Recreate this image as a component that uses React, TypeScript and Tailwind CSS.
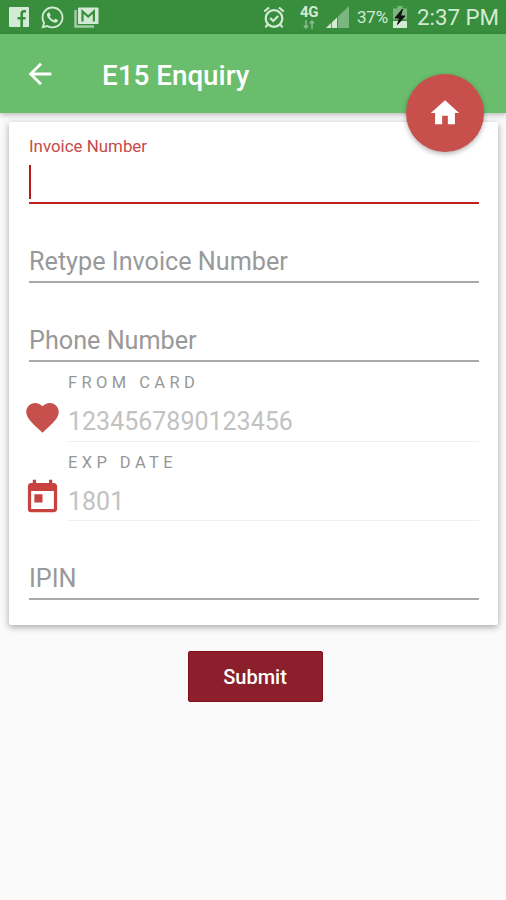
import { useState } from 'react';
import { MdArrowBack, MdFavorite, MdHome, MdToday } from 'react-icons/md';
import { FaWhatsapp } from 'react-icons/fa';

function StatusBar() {
    return (
        <div className="h-[34px] bg-[#388e3c] flex items-center justify-between pl-[9px] pr-[7px] text-[#d3ead4]">
            <div className="flex items-center">
                <svg className="w-[20px] h-[20px]" viewBox="0 0 20 20">
                    <rect width="20" height="20" rx="1" fill="currentColor" />
                    <path d="M17 4.300h-2c-1.600 0-2.300.9-2.300 2.500V20M8.500 11.300h8" fill="none" stroke="#388e3c" strokeWidth="2.600" />
                </svg>
                <FaWhatsapp className="size-[25px] ml-[11px]" />
                <svg className="w-[25px] h-[22px] ml-[9px]" viewBox="0 0 25 22">
                    <path d="M1.500 4v16.500H20" fill="none" stroke="currentColor" strokeWidth="2.500" opacity="0.7" />
                    <rect x="4" y="1.500" width="20.500" height="16.500" rx="1" fill="currentColor" />
                    <path d="M8.500 15.500V5.500l5.700 5 5.700-5v10" fill="none" stroke="#388e3c" strokeWidth="2.200" />
                </svg>
            </div>

            <div className="flex items-center">
                <svg className="w-[22px] h-[23px]" viewBox="0 0 22 23" fill="none" stroke="currentColor" strokeWidth="2.200">
                    <circle cx="11" cy="12.500" r="8.300" />
                    <path d="M1.300 5.500 6 1.500M20.700 5.500 16 1.500M4.500 18.500 2.500 21.500M17.500 18.500l2 3M7.200 12l3 3 5-5" />
                </svg>
                <div className="w-[20px] h-[24px] ml-[14px] flex flex-col items-center">
                    <span className="text-[15px] leading-[14px] font-bold tracking-[-0.5px]">4G</span>
                    <svg className="w-[12px] h-[9px] mt-[1px] opacity-50" viewBox="0 0 12 9" fill="none" stroke="currentColor" strokeWidth="1.600">
                        <path d="M3 0v8M.8 5.500 3 8l2.200-2.500M9 9V1M6.800 3.500 9 1l2.200 2.500" />
                    </svg>
                </div>
                <svg className="w-[23px] h-[22px] ml-[7px]" viewBox="0 0 23 22">
                    <path d="M0 22 23 0v22z" fill="#7ab67d" />
                    <path d="M0 22 11 11.500V22z" fill="currentColor" />
                    <path d="M5.500 15v7M11.500 10v12" stroke="#388e3c" strokeWidth="0.800" />
                </svg>
                <span className="ml-[8px] w-[32px] text-[17px] leading-none tracking-[-0.2px] whitespace-nowrap">37%</span>
                <svg className="w-[14px] h-[22px] ml-[4px]" viewBox="0 0 14 22">
                    <path d="M4.500 0h5v2.500H14v11H0v-11h4.500z" fill="#7ab67d" />
                    <path d="M0 15h14v7H0z" fill="currentColor" />
                    <path d="M9.500 3 2 12h4.500L4.500 18.500 12 10H7.500z" fill="#101510" stroke="#101510" />
                </svg>
                <span className="ml-[10px] w-[82px] text-[22.300px] leading-none whitespace-nowrap">2:37 PM</span>
            </div>
        </div>
    );
}

function TextField({ label }: { label: string }) {
    return (
        <div className="h-[79px] border-b-2 border-[#a9a9a9] flex items-end pb-[4px]">
            <span className="text-[25.200px] leading-[30px] text-[#999999]">{label}</span>
        </div>
    );
}

function CardField({ label, value, icon }: { label: string; value: string; icon: React.ReactNode }) {
    return (
        <div className="h-[79.500px] flex">
            <div className="w-[39px] pt-[36px] -ml-[6px] mr-[6px]">{icon}</div>
            <div className="flex-1 border-b border-[#f0f0f0] pt-[11px]">
                <p className="text-[16.500px] leading-[20px] tracking-[4.400px] text-[#979797]">{label}</p>
                <p className="mt-[14px] text-[25px] leading-[30px] text-[#c2c2c2]">{value}</p>
            </div>
        </div>
    );
}

function App() {
    const [invoice, setInvoice] = useState<string>('');

    return (
        <div className="w-[506px] h-[900px] bg-[#fafafa] overflow-hidden font-['Roboto',sans-serif]">
            <StatusBar />

            <header className="relative h-[79px] bg-[#69bd6c] shadow-[0_2px_5px_rgba(0,0,0,0.25)] flex items-center pl-[23px] text-white">
                <MdArrowBack className="size-[34px]" />
                <h1 className="ml-[45px] pt-[4px] text-[27.800px] font-medium leading-none">E15 Enquiry</h1>
                <button
                    type="button"
                    aria-label="Home"
                    className="absolute z-10 right-[22px] top-[40px] size-[78px] rounded-full bg-[#c8504c] shadow-[0_2px_5px_rgba(0,0,0,0.3)] flex items-center justify-center pb-[1px]"
                >
                    <MdHome className="size-[34px]" />
                </button>
            </header>

            <main className="mt-[9px] ml-[9px] mr-[8px] h-[503px] rounded-[2px] bg-white shadow-[0_2px_7px_rgba(0,0,0,0.35)] pl-[20px] pr-[19px]">
                <div className="h-[82px] border-b-2 border-[#c0201f] pt-[14px]">
                    <p className="text-[16.900px] leading-[20px] text-[#c64a4b]">Invoice Number</p>
                    <div className="mt-[9px] flex">
                        <span className="w-[2px] h-[34px] bg-[#b71c1c]" />
                        <input
                            className="flex-1 outline-none text-[25px]"
                            value={invoice}
                            onChange={(e) => setInvoice(e.target.value)}
                        />
                    </div>
                </div>
                <TextField label="Retype Invoice Number" />
                <TextField label="Phone Number" />
                <CardField label="FROM CARD" value="1234567890123456" icon={<MdFavorite className="size-[39px] text-[#c8504c]" />} />
                <CardField label="EXP DATE" value="1801" icon={<MdToday className="size-[39px] text-[#c8433f]" />} />
                <TextField label="IPIN" />
            </main>

            <div className="mt-[26px] flex justify-center">
                <button
                    type="button"
                    className="ml-[4px] w-[135px] h-[51px] rounded-[2px] border border-[#7f1019] bg-[#8b1f2b] text-white text-[20px] font-medium"
                >
                    Submit
                </button>
            </div>
        </div>
    );
}

export default App;
